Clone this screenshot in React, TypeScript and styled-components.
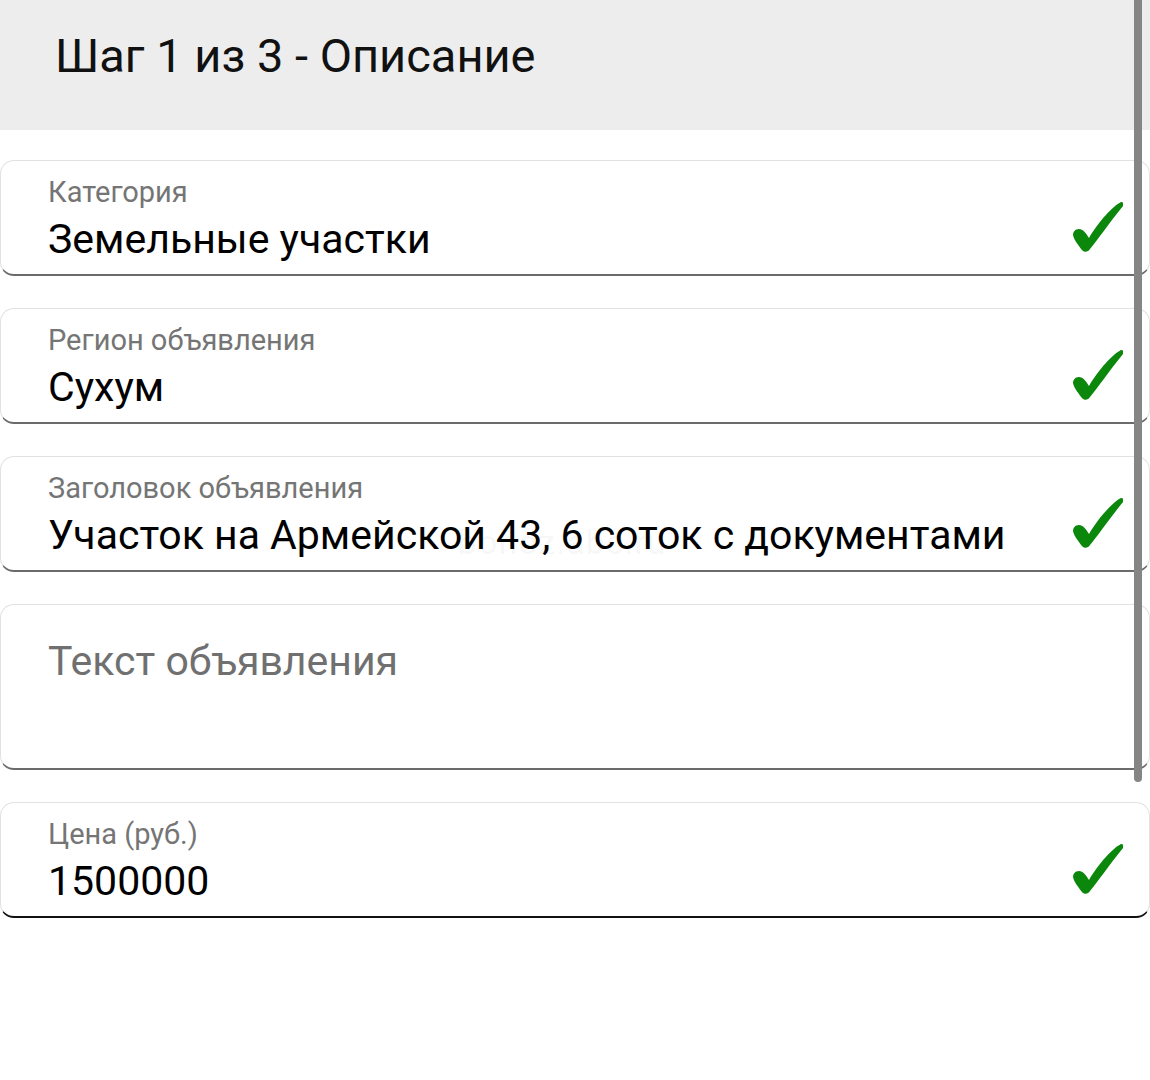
import React from "react";
import styled, { createGlobalStyle } from "styled-components";

const Global = createGlobalStyle`
  html, body { margin: 0; padding: 0; background: #ffffff; }
  body { font-family: Roboto, "Noto Sans", sans-serif; }
`;

const Page = styled.div`
  position: relative;
  width: 1150px;
  height: 1080px;
  overflow: hidden;
  background: #fff;
`;

const Header = styled.header`
  height: 130px;
  background: #ededed;
  display: flex;
  align-items: center;
  padding-left: 55px;
  box-sizing: border-box;
`;

const Title = styled.h1`
  margin: 0;
  margin-top: -20px;
  font-family: Roboto, sans-serif;
  font-weight: 400;
  font-size: 47px;
  color: #111;
`;

const Form = styled.div`
  display: flex;
  flex-direction: column;
  gap: 32px;
  padding-top: 30px;
`;

const Field = styled.div<{ $tall?: boolean; $active?: boolean }>`
  box-sizing: border-box;
  width: 1150px;
  height: ${(p) => (p.$tall ? 166 : 116)}px;
  border: 1px solid #e2e2e2;
  border-bottom: 2px solid ${(p) => (p.$active ? "#111" : "#6b6b6b")};
  border-radius: 14px;
  display: flex;
  align-items: flex-start;
  padding: 14px 26px 0 47px;
`;

const Texts = styled.div`
  flex: 1;
  display: flex;
  flex-direction: column;
`;

const Label = styled.div`
  font-size: 29px;
  color: #757575;
  line-height: 34px;
`;

const Value = styled.div`
  font-size: 41px;
  color: #000;
  line-height: 48px;
  margin-top: 6px;
`;

const Placeholder = styled.div`
  font-size: 41px;
  color: #707070;
  line-height: 48px;
  margin-top: 18px;
`;

const Check = styled.svg`
  width: 50px;
  height: 52px;
  flex: none;
  margin-top: 26px;
`;

const Scrollbar = styled.div`
  position: absolute;
  top: 0;
  left: 1134px;
  width: 8px;
  height: 782px;
  background: #858585;
  border-radius: 0 0 4px 4px;
`;

const Watermark = styled.div`
  position: absolute;
  top: 522px;
  left: 458px;
  font-size: 34px;
  color: rgba(0, 0, 0, 0.05);
  letter-spacing: 1px;
`;

const CheckIcon = () => (
  <Check viewBox="0 0 50 52">
    <path
      d="M48 1 C 40 5, 26 20, 16 37 C 13 32, 10 28, 6 28 C 2 28, 0 31, 0 34 C 1 39, 6 45, 9 49 C 11 51.5, 15 51.5, 17 48 C 24 40, 36 22, 50 5 C 51 3, 50 0.5, 48 1 Z"
      fill="#0b870b"
    />
  </Check>
);

const fields = [
  { label: "Категория", value: "Земельные участки" },
  { label: "Регион объявления", value: "Сухум" },
  { label: "Заголовок объявления", value: "Участок на Армейской 43, 6 соток с документами" },
];

export default function App() {
  return (
    <Page>
      <Global />
      <Header>
        <Title>Шаг 1 из 3 - Описание</Title>
      </Header>
      <Form>
        {fields.map((f) => (
          <Field key={f.label}>
            <Texts>
              <Label>{f.label}</Label>
              <Value>{f.value}</Value>
            </Texts>
            <CheckIcon />
          </Field>
        ))}
        <Field $tall>
          <Texts>
            <Placeholder>Текст объявления</Placeholder>
          </Texts>
        </Field>
        <Field $active>
          <Texts>
            <Label>Цена (руб.)</Label>
            <Value>1500000</Value>
          </Texts>
          <CheckIcon />
        </Field>
      </Form>
      <Watermark>bohoz.abc.ru</Watermark>
      <Scrollbar />
    </Page>
  );
}
